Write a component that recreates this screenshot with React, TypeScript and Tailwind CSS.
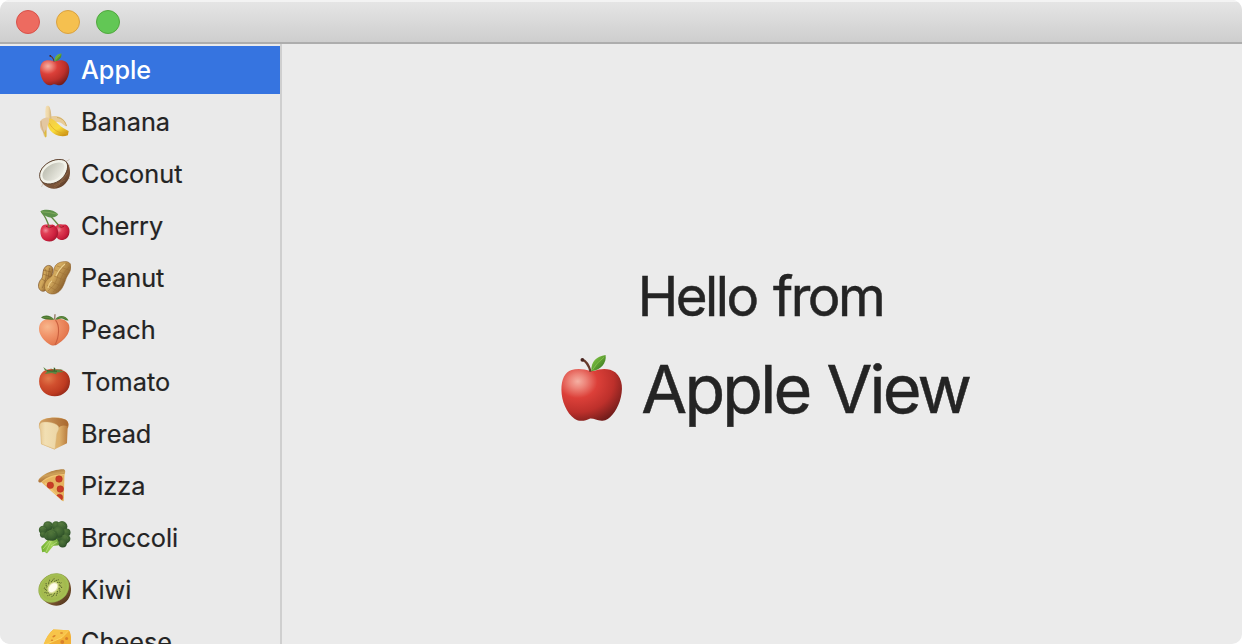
import React from "react";

type IconProps = { className?: string };

function AppleIcon({ className = "size-[34px]" }: IconProps) {
  const id = React.useId();
  return (
    <svg viewBox="0 0 34 34" className={className} aria-hidden="true">
      <defs>
        <radialGradient id={id + "a"} cx="0.27" cy="0.24" r="0.85">
          <stop offset="0" stopColor="#f5b0a3" />
          <stop offset="0.16" stopColor="#ed8479" />
          <stop offset="0.38" stopColor="#dc4039" />
          <stop offset="0.7" stopColor="#bd302b" />
          <stop offset="1" stopColor="#731d1b" />
        </radialGradient>
        <linearGradient id={id + "l"} x1="0" y1="0" x2="1" y2="1">
          <stop offset="0.3" stopColor="#74b63d" />
          <stop offset="0.7" stopColor="#488927" />
        </linearGradient>
      </defs>
      <path d="M17.2 8.2C14 7.1 10.5 6.9 8 7.7C4.7 8.8 3.1 12.2 3.1 17.2C3.1 22.7 5.6 28.4 9.4 31.2C12.3 33.1 14.9 31.9 16.7 31.2C18.8 30.9 20.1 32.4 23 32.2C26.4 31.9 29.6 27.6 31.2 22.9C33 17.3 32.8 12.2 29.2 8.9C26.3 6.6 21.9 6.9 18.7 8.2Z" fill={"url(#" + id + "a)"} />
      <path d="M17.2 8.5C16.3 5.4 14.6 3.2 13.1 2.7" stroke="#66392a" strokeWidth="1.1" fill="none" />
      <circle cx="13.2" cy="2.8" r=".9" fill="#4a2620" />
      <path d="M17.5 8.3C17.3 3.7 19.9 1.1 24.4.5C25 4 22.4 7.9 17.5 8.3Z" fill={"url(#" + id + "l)"} />
      <path d="M18 7.8Q19.8 4.4 23.7 1.5" stroke="#8dc653" strokeWidth=".35" fill="none" />
    </svg>
  );
}

function BananaIcon() {
  return (
    <svg viewBox="0 0 34 34" className="size-[34px]" aria-hidden="true">
      <defs>
        <linearGradient id="banana-skin" x1="0" y1="0" x2=".7" y2="1">
          <stop stopColor="#f0c84c" /><stop offset=".6" stopColor="#f9dc3c" /><stop offset="1" stopColor="#cf9717" />
        </linearGradient>
        <linearGradient id="banana-flesh"><stop stopColor="#f3e0b6" /><stop offset=".5" stopColor="#efd7a6" /><stop offset="1" stopColor="#d0b079" /></linearGradient>
      </defs>
      <path d="M12 12C16 10.7 21 10.7 24.5 13C28 15.2 29.7 18.5 29.5 21.5C25.8 20.2 24.3 16.3 18.5 17.2L13 18Z" fill="#e8cc98" />
      <path d="M20 12.5C25.5 13 28.5 17 29.5 21" stroke="#c9a655" strokeWidth=".8" fill="none" />
      <path d="M8.7 2.5C9.2.2 12.2.4 12.8 2.6C14.5 7 14.6 13 14 18.8L9.4 19C8.5 13 7.8 7 8.7 2.5Z" fill="url(#banana-flesh)" />
      <path d="M11.6 13.6C15.4 12.7 18.9 16.4 21.8 19.4C24.5 22.3 28.8 24.3 31.7 26L30.9 30.3C24.2 32.6 16.6 30.1 12.9 25.1C10.4 21.7 9.9 17.2 11.6 13.6Z" fill="url(#banana-skin)" />
      <path d="M12.4 18.2C15.7 24.7 22 28.6 30 28.8" stroke="#dba620" strokeWidth=".7" fill="none" />
      <path d="M11.5 12.5C7.7 12.4 3.3 14.2 3 17.2C2.7 20.8 3.3 24 5.2 26C6.8 27.8 6 30.8 8.4 32.6C10.8 29.2 9.2 24.5 10.8 20.5C11.6 18 12.8 15.6 11.5 12.5Z" fill="#e3c7a1" />
      <path d="M4 16C4.2 22 6.4 25.4 7 28.4" stroke="#c8a579" strokeWidth=".7" fill="none" />
      <path d="M9 24.5L9.6 31.4L8.3 32.6L7 28Z" fill="#dcbb3f" />
    </svg>
  );
}

function CoconutIcon() {
  return (
    <svg viewBox="0 0 34 34" className="size-[34px]" aria-hidden="true">
      <defs>
        <linearGradient id="coco-shell" x1="0" y1="0" x2="1" y2="1"><stop stopColor="#8b6b50" /><stop offset=".7" stopColor="#795338" /><stop offset="1" stopColor="#432717" /></linearGradient>
        <linearGradient id="coco-milk" x1="0" y1=".2" x2="1" y2=".8"><stop stopColor="#b7b8ab" /><stop offset=".6" stopColor="#dcdcd2" /><stop offset="1" stopColor="#f5f4ed" /></linearGradient>
      </defs>
      <path d="M28 5L32.6 2.4M30.8 9L33 8M31 20L33.2 22M6 27L4.4 30" stroke="#b6a58e" strokeWidth=".5" />
      <path d="M3.1 14.5C6.4 7 16 1.3 24.7 2.2C31.6 3.1 34.2 11.5 32.6 19C30.8 26.5 23.4 32 16.8 31.8C9.2 31.8 .1 24.3 3.1 14.5Z" fill="url(#coco-shell)" />
      <path d="M3.7 14C6.7 7 16.2 1.6 24.3 2.6C32 3.5 31.8 11 28.2 17.2C24.6 24.2 14.8 28.6 8 26.3C2.6 24.3 1.6 18.9 3.7 14Z" fill="#f2f2e9" stroke="#4b3120" strokeWidth=".8" />
      <path d="M6.4 14.8C9.3 9.2 16.8 5.2 22.8 5.5C28.6 6 28.2 10.9 25.6 15.4C22.3 21.5 14.7 24.8 9.4 23.6C5.4 22.4 4.6 18.3 6.4 14.8Z" fill="url(#coco-milk)" />
      <path d="M17 29L28 23M22 27L30.5 16M17 31L23 27" stroke="#a27a53" strokeWidth=".6" opacity=".7" />
    </svg>
  );
}

function CherryIcon() {
  return (
    <svg viewBox="0 0 34 34" className="size-[34px]" aria-hidden="true">
      <defs>
        <radialGradient id="cherry-red" cx=".3" cy=".35" r=".8"><stop stopColor="#f08d99" /><stop offset=".25" stopColor="#e03f55" /><stop offset=".7" stopColor="#cb1f3d" /><stop offset="1" stopColor="#941429" /></radialGradient>
      </defs>
      <path d="M4.5 3C8 7 10.5 12.2 12.2 18.5M13 6.5Q18.3 12.2 23 18" stroke="#628c43" strokeWidth="1.3" fill="none" />
      <path d="M3.3 2.2C8-.2 16.5.3 21.2 5.2C19.5 9.4 9.4 10.6 3.3 2.2Z" fill="#5d9149" />
      <path d="M4.5 2.8Q12 3 20.5 5.3" stroke="#94b968" strokeWidth=".6" fill="none" />
      <path d="M19.5 16.5C22.5 14.3 26 15.8 28.5 15.5C31.6 16.6 33 20.1 32.4 23.8C31.7 29 27.6 31.5 23.8 31C17.5 30 15.2 20.2 19.5 16.5Z" fill="url(#cherry-red)" />
      <path d="M5 17.2C8 14.4 12 16.3 15.4 15.4C20.8 17 22.2 23 20.4 27.3C17.6 33.7 9.4 34.1 5.2 29.2C2.8 25.7 2.8 20.2 5 17.2Z" fill="url(#cherry-red)" />
      <path d="M9 17.3Q12.5 20 16.4 17.2M22 17.4Q24.2 19.2 27 17.4" stroke="#9b1429" strokeWidth=".9" fill="none" />
      <path d="M12.2 18.5L11.6 16M23 18L21.8 16.4" stroke="#628c43" strokeWidth="1.1" />
    </svg>
  );
}

function PeanutIcon() {
  return (
    <svg viewBox="0 0 34 34" className="size-[34px]" aria-hidden="true">
      <defs><linearGradient id="peanut-shell" x1="0" y1="0" x2="1" y2=".7"><stop stopColor="#b98a41" /><stop offset=".45" stopColor="#d3aa5e" /><stop offset="1" stopColor="#6f4319" /></linearGradient></defs>
      <path d="M8.7 5.5C12.8 2.4 17.5 6.3 15.7 11C14.5 15.2 15.4 19.5 11.7 25.2C9.4 29.5 6.8 31.5 3.8 29.6C.2 27.2 1.1 20.9 4.4 18C6.6 15.5 4.8 9 8.7 5.5Z" fill="url(#peanut-shell)" stroke="#6e451d" strokeWidth=".6" />
      <path d="M8.6 8Q11 16 5.2 27M12.7 7Q12 16 7.5 27M5 18L11 22M6 13L14 16M6 9L14 11" stroke="#7e5325" strokeWidth=".6" fill="none" opacity=".75" />
      <path d="M20.4 2.6C24.4.2 31 -.6 33.2 2.7C35 6.4 33.3 10.6 30.9 14C28.4 17.9 28.8 19.9 26 25.3C23.3 31 18.5 34 13.3 32.8C7.4 31 6 24.8 8.9 20.3C11 16.8 15 16.8 16.3 12.1C17 8.2 17.2 4.8 20.4 2.6Z" fill="url(#peanut-shell)" stroke="#8a5c29" strokeWidth=".5" />
      <path d="M30 2Q20 12 20 18Q18 25 11 30M32 6Q24 14 23 21Q21 28 16 31M18 9L29 14M20 5L32 9M17 15L27 19M13 20L24 25M10 24L20 30" stroke="#9a6c33" strokeWidth=".55" fill="none" opacity=".8" />
      <path d="M28 3Q22 8 19 15M15 20Q12 22 11 27" stroke="#ecd08e" strokeWidth="1.1" fill="none" />
    </svg>
  );
}

function PeachIcon() {
  return (
    <svg viewBox="0 0 34 34" className="size-[34px]" aria-hidden="true">
      <defs><radialGradient id="peach-skin" cx=".28" cy=".3" r=".85"><stop stopColor="#f8b78d" /><stop offset=".4" stopColor="#f1946a" /><stop offset=".78" stopColor="#e57a50" /><stop offset="1" stopColor="#c5593d" /></radialGradient></defs>
      <path d="M17.5 6.5C12.4 4.8 4.8 6.1 2.6 12C.3 19.2 4.8 26.3 12 31C15.7 33.3 18.8 33 22.2 30C29.6 25.1 34.5 17.4 31.5 10.8C29 5.9 22 5.2 17.5 6.5Z" fill="url(#peach-skin)" />
      <path d="M18.5 7.2C22.7 12 22.6 23.9 17.9 32" stroke="#c95f3f" strokeWidth="1.1" fill="none" />
      <path d="M17.2 6.5C13.4 1.4 6.7 1.7 4 4.5C6.8 6.4 12.2 7 17.2 6.5ZM18.2 6.5C20.7 2 28.3 1.4 31.6 7.4C28.3 8 27 5.4 24.3 5.5C22.1 5.5 20.8 6.8 18.2 6.5Z" fill="#4a7730" />
      <path d="M17.7 6.5L18 1.2" stroke="#805b41" strokeWidth="1.1" />
      <path d="M6 4.2Q12 4 17 6.2M19 5.8Q25 2.3 30 6.1" stroke="#7b9e4f" strokeWidth=".5" fill="none" />
    </svg>
  );
}

function TomatoIcon() {
  return (
    <svg viewBox="0 0 34 34" className="size-[34px]" aria-hidden="true">
      <defs><radialGradient id="tomato-skin" cx=".3" cy=".35" r=".8"><stop stopColor="#e17a4c" /><stop offset=".35" stopColor="#d1502f" /><stop offset=".72" stopColor="#bd3a20" /><stop offset="1" stopColor="#892517" /></radialGradient></defs>
      <path d="M17.3 4.3C10.8 3 2.2 5.8 2.1 16.2C2 25.2 9.5 31.2 17.8 31.2C26.2 31.1 33.2 25.2 33 16.2C32.9 7.4 25.7 3.4 17.3 4.3Z" fill="url(#tomato-skin)" />
      <path d="M16.7 6.2L10.4 5.3L6.3 2.1Q7 5.4 10.2 6.6L7.8 9.1L14.8 8L19.2 9.2L19.8 7.4L27.5 7L22.3 5.4L26 4.2L18.7 4.8L18 2.7L16.6 2.5L17 5.1L13 2.9Z" fill="#5d8741" />
      <path d="M10 5.8L20 6.2M17.4 5.6L17.5 3.2" stroke="#294f27" strokeWidth=".8" />
    </svg>
  );
}

function BreadIcon() {
  return (
    <svg viewBox="0 0 34 34" className="size-[34px]" aria-hidden="true">
      <defs>
        <linearGradient id="bread-top"><stop stopColor="#d3a366" /><stop offset="1" stopColor="#a9682e" /></linearGradient>
        <linearGradient id="bread-side"><stop stopColor="#edcb8a" /><stop offset=".7" stopColor="#dcaf6a" /><stop offset="1" stopColor="#b5773a" /></linearGradient>
        <linearGradient id="bread-face"><stop stopColor="#e6c892" /><stop offset=".3" stopColor="#f2dfb3" /><stop offset="1" stopColor="#ecd5a4" /></linearGradient>
      </defs>
      <path d="M3.5 12.4C1.2 9.5 2 3.5 6.1 2.2C13 .2 23-.5 28.6 2.6C32.4 5.3 31.9 9 30.6 11.7L30 26.3L17.3 32.6L4 27Z" fill="url(#bread-side)" />
      <path d="M3 5C7-.3 24-.5 29.2 3.2C31.5 5.1 31.8 8.3 30.4 9.6C27.4 7.6 23.4 8.3 20.5 12C15 8.7 6.3 7.4 2.5 9.6C1.7 8 2.1 6.2 3 5Z" fill="url(#bread-top)" />
      <path d="M3.6 13C1.2 10.3 2 6.1 5.4 5.2C11 4.2 20 6.2 21.6 9.8C22.7 12.7 20 15 19.7 17.4L18 32.2L4.4 27Z" fill="url(#bread-face)" stroke="#d5b177" strokeWidth=".4" />
    </svg>
  );
}

function PizzaIcon() {
  return (
    <svg viewBox="0 0 34 34" className="size-[34px]" aria-hidden="true">
      <defs>
        <linearGradient id="pizza-crust" x1="0" y1="0" x2=".35" y2="1"><stop stopColor="#8f5c25" /><stop offset=".5" stopColor="#cfa25a" /><stop offset="1" stopColor="#a2602a" /></linearGradient>
        <clipPath id="pizza-slice"><path d="M3 12Q12 4 27.5 4L26.6 32.4Z" /></clipPath>
      </defs>
      <path d="M3 12Q12 4 27.5 4L26.8 31.2Q26.7 33 25 31.8Z" fill="#e6b35f" />
      <g clipPath="url(#pizza-slice)">
        <path d="M3 13Q15 5 28 5M8 14L21 28" stroke="#f1c673" strokeWidth="2" fill="none" />
        <g fill="#c93c26" stroke="#b23023" strokeWidth=".5">
          <circle cx="22" cy="10" r="3.3" /><circle cx="13.3" cy="16.3" r="3.3" /><circle cx="23.3" cy="20" r="3.3" /><circle cx="22.5" cy="28.4" r="3.2" />
        </g>
      </g>
      <path d="M1.4 12.4C.8 8.7 12.1.4 26.8.3C28.8 1 28.6 4.7 27 5.1C17 5.5 10.3 7.6 3.9 13.2Q1.9 14.1 1.4 12.4Z" fill="url(#pizza-crust)" />
    </svg>
  );
}

function BroccoliIcon() {
  return (
    <svg viewBox="0 0 34 34" className="size-[34px]" aria-hidden="true">
      <defs>
        <linearGradient id="broc-stem"><stop stopColor="#6fae2f" /><stop offset=".5" stopColor="#9fd254" /><stop offset="1" stopColor="#568d31" /></linearGradient>
        <radialGradient id="broc-head" cx=".4" cy=".3" r=".75"><stop stopColor="#53783c" /><stop offset=".65" stopColor="#3b6030" /><stop offset="1" stopColor="#294924" /></radialGradient>
      </defs>
      <path d="M12.5 17L4.2 25.8L5.2 31.2L7.4 30.7L10 32.6L16.2 25L24 24L24.3 16Z" fill="url(#broc-stem)" />
      <path d="M15 18L9 31M13 20L6 28M20 21L14 25" stroke="#c4e286" strokeWidth=".7" />
      <g fill="url(#broc-head)">
        <path d="M8 3L27 3L32 12L30 23L24 25L20 18L9 17L4 12Z" />
        <circle cx="11" cy="5" r="4.8" /><circle cx="19" cy="4.5" r="4.2" /><circle cx="25" cy="5.5" r="5.4" /><circle cx="6" cy="9" r="4.2" /><circle cx="29.5" cy="11.5" r="4" /><circle cx="28.7" cy="17.7" r="4.7" /><circle cx="25.7" cy="22.4" r="4" /><circle cx="6" cy="13.6" r="3.1" /><circle cx="11.3" cy="15" r="4.4" /><circle cx="21.7" cy="11" r="5.8" /><circle cx="15" cy="14.2" r="5.6" />
      </g>
      <path d="M3 8Q6 5 9 8M8 3Q12 1 15 5M21 3Q25 1 28 5M11 11Q14 8 18 12M25 15Q29 13 31 18" stroke="#648849" strokeWidth=".7" fill="none" strokeDasharray=".6 .6" />
    </svg>
  );
}

function KiwiIcon() {
  const seeds = Array.from({ length: 36 }, (_, i) => {
    const a = (i * Math.PI) / 18;
    const r = 7 + (i % 3) * 1.2;
    return [Math.cos(a) * r, Math.sin(a) * r * 0.85];
  });
  return (
    <svg viewBox="0 0 34 34" className="size-[34px]" aria-hidden="true">
      <defs>
        <linearGradient id="kiwi-skin" x1="0" y1="0" x2="1" y2="1"><stop offset=".3" stopColor="#a38558" /><stop offset=".7" stopColor="#74502d" /><stop offset="1" stopColor="#3d2514" /></linearGradient>
        <radialGradient id="kiwi-flesh"><stop stopColor="#c6d16a" /><stop offset=".45" stopColor="#aebf58" /><stop offset=".8" stopColor="#a2b94d" /><stop offset="1" stopColor="#a7c659" /></radialGradient>
      </defs>
      <path d="M2.9 11C6.3 3.2 16-1 24.5 1.5C32.5 4.2 35.7 13.7 33.2 22C30.7 30.1 22.5 34.6 14.8 32C6 29.5-.6 20.8 2.9 11Z" fill="url(#kiwi-skin)" />
      <ellipse cx="16.8" cy="15" rx="16" ry="13.6" transform="rotate(-36 16.8 15)" fill="url(#kiwi-flesh)" stroke="#879b3d" strokeWidth=".4" />
      <g transform="translate(16 14.7) rotate(-48)">
        {seeds.map(([x, y], i) => <ellipse key={i} cx={x} cy={y} rx=".8" ry=".5" fill="#56632b" />)}
        <ellipse rx="6.4" ry="4.6" fill="#dfe0a4" /><ellipse rx="5.2" ry="3.5" fill="#fffdeb" />
      </g>
    </svg>
  );
}

function CheeseIcon() {
  return (
    <svg viewBox="0 0 34 34" className="size-[34px]" aria-hidden="true">
      <path d="M6.5 20Q10 9.5 16.3 4.4L31.6 5.2Q34 7 34 24L26 34L4 30Z" fill="#f3b83c" />
      <path d="M16.3 4.4L31.6 5.2L25 13L6 21Q10 9.5 16.3 4.4Z" fill="#f7c44a" />
      <path d="M31.6 5.2L25 12.5L5 21V34H34V12Q33.5 7 31.6 5.2Z" fill="#f2b035" />
      <path d="M6.5 20.5L25 12.6L31.9 5.4" stroke="#ffdc6d" strokeWidth=".8" fill="none" />
      <g fill="#d9812c"><ellipse cx="17" cy="11.2" rx="1.8" ry=".9" transform="rotate(-30 17 11.2)" /><ellipse cx="24.5" cy="8" rx="1.6" ry=".8" /><circle cx="25.3" cy="17" r="1.9" /><circle cx="29.6" cy="13.4" r="1.5" /><ellipse cx="15" cy="15.3" rx="1.2" ry=".7" /></g>
    </svg>
  );
}

const items = [
  { name: "Apple", Icon: AppleIcon },
  { name: "Banana", Icon: BananaIcon },
  { name: "Coconut", Icon: CoconutIcon },
  { name: "Cherry", Icon: CherryIcon },
  { name: "Peanut", Icon: PeanutIcon },
  { name: "Peach", Icon: PeachIcon },
  { name: "Tomato", Icon: TomatoIcon },
  { name: "Bread", Icon: BreadIcon },
  { name: "Pizza", Icon: PizzaIcon },
  { name: "Broccoli", Icon: BroccoliIcon },
  { name: "Kiwi", Icon: KiwiIcon },
  { name: "Cheese", Icon: CheeseIcon },
];

export default function App() {
  return (
    <div className="h-[644px] w-[1242px] overflow-hidden bg-white font-['Inter',sans-serif] text-[#242424]">
      <div className="flex h-full flex-col overflow-hidden rounded-[10px] bg-[#ebebeb]">
        <header className="flex h-11 shrink-0 items-center gap-4 border-t-2 border-b-2 border-t-[#f3f3f3] border-b-[#adadad] bg-linear-to-b from-[#e5e5e5] to-[#cecece] px-4">
          <span className="size-6 rounded-full border border-[#d85149] bg-[#ed6b60]" />
          <span className="size-6 rounded-full border border-[#d9a141] bg-[#f5c04f]" />
          <span className="size-6 rounded-full border border-[#51a73e] bg-[#62c755]" />
        </header>
        <div className="flex min-h-0 flex-1">
          <nav className="w-[282px] shrink-0 overflow-hidden border-r-2 border-[#cfcfcf] bg-[#eaeaea]">
            {items.map(({ name, Icon }, i) => (
              <div
                key={name}
                className={
                  i === 0
                    ? "my-0.5 flex h-12 items-center gap-2.5 bg-[#3674e0] pl-[37px] text-[25.2px] font-medium text-white"
                    : "flex h-[52px] items-center gap-2.5 pl-[37px] text-[25.3px] [-webkit-text-stroke:0.2px_#242424]"
                }
              >
                <Icon />
                <span className="leading-8">{name}</span>
              </div>
            ))}
          </nav>
          <main className="flex flex-1 flex-col items-center pt-[217px] [-webkit-text-stroke:0.5px_#242424]">
            <div className="h-[70px] pr-[3px] text-[54.5px] leading-[70px] tracking-[-2.5px] [word-spacing:3.5px]">Hello from</div>
            <div className="mt-[15px] flex h-[86px] items-center gap-4 text-[66.5px] leading-[86px] tracking-[-2.8px] [word-spacing:1px]">
              <AppleIcon className="size-[70.5px]" />
              <span>Apple View</span>
            </div>
          </main>
        </div>
      </div>
    </div>
  );
}
